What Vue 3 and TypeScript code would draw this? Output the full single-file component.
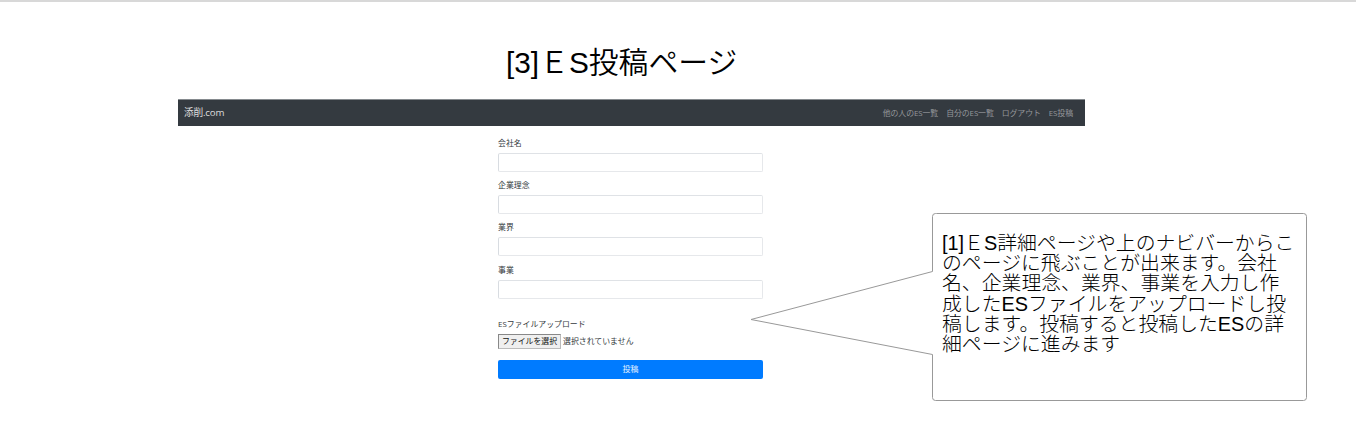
<script setup lang="ts">
const links: string[] = ['他の人のES一覧', '自分のES一覧', 'ログアウト', 'ES投稿']
const fields: string[] = ['会社名', '企業理念', '業界', '事業']
const noteLines: string[] = [
  '[1]ＥS詳細ページや上のナビバーからこ',
  'のページに飛ぶことが出来ます。会社',
  '名、企業理念、業界、事業を入力し作',
  '成したESファイルをアップロードし投',
  '稿します。投稿すると投稿したESの詳',
  '細ページに進みます',
]
</script>

<template>
  <main class="slide">
    <h1 class="title">[3]ＥS投稿ページ</h1>
    <section class="shot">
      <nav class="navbar">
        <span class="brand">添削.com</span>
        <div class="links">
          <a v-for="link in links" :key="link">{{ link }}</a>
        </div>
      </nav>
      <form class="form" @submit.prevent>
        <div v-for="field in fields" :key="field" class="group">
          <label>{{ field }}</label>
          <input type="text" :aria-label="field" />
        </div>
        <div class="upload">
          <label>ESファイルアップロード</label>
          <div class="file-row">
            <span class="file-btn">ファイルを選択</span>
            <span class="file-state">選択されていません</span>
          </div>
        </div>
        <button class="submit" type="submit">投稿</button>
      </form>
    </section>
    <aside class="callout">
      <svg class="bubble" width="558" height="190" viewBox="0 0 558 190">
        <path
          d="M186.500 1.500H553.500Q556.500 1.500 556.500 4.500V185.500Q556.500 188.500 553.500 188.500H185.500Q182.500 188.500 182.500 185.500V142.500L1 107.500L182.500 59.500V4.500Q182.500 1.500 185.500 1.500Z"
          fill="#fff"
          stroke="#999"
          stroke-width="1"
        />
      </svg>
      <p class="note">
        <span v-for="line in noteLines" :key="line">{{ line }}</span>
      </p>
    </aside>
  </main>
</template>

<style>
body {
  background: #fff;
}
</style>

<style scoped>
.slide {
  position: relative;
  box-sizing: border-box;
  width: 1356px;
  height: 425px;
  overflow: hidden;
  border-top: 2px solid #d8d8d8;
  background: #fff;
  color: #000;
  font-family: "Liberation Sans", "Noto Sans CJK JP", sans-serif;
}
.title {
  margin: 41px 0 0 506px;
  height: 56px;
  font-size: 29.800px;
  font-weight: 350;
  line-height: 40px;
  white-space: nowrap;
}
.shot {
  width: 907px;
  margin-left: 178px;
  color: #343a40;
  font-family: "Open Sans", "Noto Sans CJK JP", sans-serif;
}
.navbar {
  display: flex;
  align-items: center;
  justify-content: space-between;
  box-sizing: border-box;
  height: 27px;
  padding: 0 12px 2px 6px;
  border-top: 1px solid #858a8e;
  background: #343a40;
}
.brand {
  color: #dcddde;
  font-size: 9.700px;
  letter-spacing: -0.200px;
}
.links {
  display: flex;
  gap: 8px;
  color: #94979b;
  font-size: 7.900px;
  letter-spacing: -0.080px;
  white-space: nowrap;
}
.form {
  width: 265px;
  margin-left: 320px;
  padding-top: 11px;
  font-size: 7.900px;
}
.group {
  height: 42.200px;
}
label {
  display: block;
  height: 12px;
  line-height: 13px;
}
input {
  display: block;
  box-sizing: border-box;
  width: 100%;
  height: 19px;
  margin-top: 4px;
  padding: 0 6px;
  border: 1px solid #e6e8eb;
  border-top-color: #dfe2e6;
  border-left-color: #d8dce1;
  border-radius: 2px;
  background: #fff;
  font: inherit;
}
.upload {
  padding-top: 12px;
}
.file-row {
  display: flex;
  align-items: center;
  gap: 2px;
  height: 15px;
  margin-top: 4px;
}
.file-btn {
  box-sizing: border-box;
  width: 63px;
  height: 15px;
  border: 1px solid #bbb;
  border-top-color: #888;
  border-left-color: #888;
  background: #efefef;
  color: #111;
  line-height: 13px;
  text-align: center;
  white-space: nowrap;
}
.file-state {
  line-height: 13px;
}
.submit {
  display: block;
  width: 100%;
  height: 19px;
  margin-top: 11px;
  padding: 0;
  border: 0;
  border-radius: 2px;
  background: #007bff;
  color: #e6f2ff;
  font: inherit;
  line-height: 19px;
}
.callout {
  position: absolute;
  top: 210px;
  left: 750px;
  width: 558px;
  height: 190px;
}
.bubble {
  position: absolute;
  inset: 0;
}
.note {
  position: relative;
  margin: 21px 0 0 192px;
  font-size: 19.850px;
  font-weight: 300;
  line-height: 20.200px;
  white-space: nowrap;
}
.note span {
  display: block;
}
</style>
